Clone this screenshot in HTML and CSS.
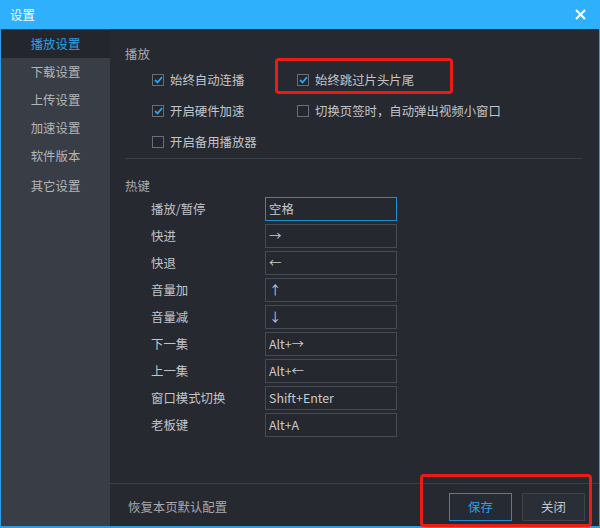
FILE: index.html
```html
<!DOCTYPE html>
<html lang="zh-CN">
<head>
    <meta charset="UTF-8">
    <meta name="viewport" content="width=device-width, initial-scale=1.0">
    <title>设置</title>
    <link rel="stylesheet" href="styles.css">
</head>
<body>
<div class="window">
    <div class="title-bar">
        <span class="title">设置</span>
        <svg class="close" width="11" height="11" viewBox="0 0 11 11">
            <path d="M1 1 L10 10 M10 1 L1 10" stroke="#fff" stroke-width="2.2" fill="none"/>
        </svg>
    </div>

    <div class="frame">
        <ul class="side-nav">
            <li class="active">播放设置</li>
            <li>下载设置</li>
            <li>上传设置</li>
            <li>加速设置</li>
            <li>软件版本</li>
            <li class="gap">其它设置</li>
        </ul>

        <div class="main">
            <div class="content">
                <div class="section-title">播放</div>
                <div class="check-grid">
                    <label class="check"><span class="box on"><svg width="9" height="8" viewBox="0 0 9 8"><path d="M1 4 L3.5 6.5 L8 1.2" stroke="#2ba3f2" stroke-width="1.8" fill="none"/></svg></span>始终自动连播</label>
                    <label class="check"><span class="box on"><svg width="9" height="8" viewBox="0 0 9 8"><path d="M1 4 L3.5 6.5 L8 1.2" stroke="#2ba3f2" stroke-width="1.8" fill="none"/></svg></span>始终跳过片头片尾</label>
                    <label class="check"><span class="box on"><svg width="9" height="8" viewBox="0 0 9 8"><path d="M1 4 L3.5 6.5 L8 1.2" stroke="#2ba3f2" stroke-width="1.8" fill="none"/></svg></span>开启硬件加速</label>
                    <label class="check"><span class="box"></span>切换页签时，自动弹出视频小窗口</label>
                    <label class="check"><span class="box"></span>开启备用播放器</label>
                </div>

                <div class="divider"></div>

                <div class="section-title hotkey-title">热键</div>
                <div class="hotkeys">
                    <span class="key-label">播放/暂停</span><span class="key-input focus">空格</span>
                    <span class="key-label">快进</span><span class="key-input">→</span>
                    <span class="key-label">快退</span><span class="key-input">←</span>
                    <span class="key-label">音量加</span><span class="key-input">↑</span>
                    <span class="key-label">音量减</span><span class="key-input">↓</span>
                    <span class="key-label">下一集</span><span class="key-input">Alt+→</span>
                    <span class="key-label">上一集</span><span class="key-input">Alt+←</span>
                    <span class="key-label">窗口模式切换</span><span class="key-input">Shift+Enter</span>
                    <span class="key-label">老板键</span><span class="key-input">Alt+A</span>
                </div>
            </div>

            <div class="footer">
                <span class="reset">恢复本页默认配置</span>
                <div class="buttons">
                    <button class="btn primary">保存</button>
                    <button class="btn">关闭</button>
                </div>
            </div>
        </div>
    </div>

    <!-- annotation boxes -->
    <div class="mark mark-skip"></div>
    <div class="mark mark-buttons"></div>
</div>
</body>
</html>
```

FILE: styles.css
```css
* {
	box-sizing: border-box;
}

body {
	margin: 0;
	background: #262930;
	font-family: "Noto Sans CJK SC", "Microsoft YaHei", sans-serif;
	font-size: 12.4px;
}

.window {
	position: relative;
	width: 600px;
	height: 528px;
	display: flex;
	flex-direction: column;
	background: #262930;
}

/* title */
.title-bar {
	height: 29px;
	flex: 0 0 29px;
	background: #2eb0fc;
	display: flex;
	align-items: center;
	justify-content: space-between;
	padding: 0 14px 0 10px;
}

.title {
	color: #fff;
	font-size: 12.4px;
}

.close {
	display: block;
}

/* frame */
.frame {
	flex: 1;
	display: flex;
	border-left: 1px solid #2a9fe6;
	border-right: 1px solid #2a9fe6;
	border-bottom: 2px solid #2a9fe6;
	min-height: 0;
}

.side-nav {
	list-style: none;
	margin: 0;
	padding: 1px 0 0;
	width: 109px;
	flex: 0 0 109px;
	background: #393d46;
}

.side-nav li {
	height: 28px;
	line-height: 28px;
	text-align: center;
	color: #b3b5b9;
}

.side-nav li.active {
	background: #23262d;
	color: #2ba3e8;
}

.side-nav li.gap {
	margin-top: 2px;
}

.main {
	flex: 1;
	display: flex;
	flex-direction: column;
}

.content {
	flex: 1;
	padding: 15px 17px 0 15px;
}

.section-title {
	height: 20px;
	line-height: 20px;
	color: #a9abb0;
}

.check-grid {
	display: grid;
	grid-template-columns: 145px auto;
	grid-auto-rows: 31px;
	padding-left: 27px;
}

.check {
	display: flex;
	align-items: center;
	color: #c2c4c8;
}

.box {
	width: 12px;
	height: 12px;
	border: 1px solid #6a6e76;
	margin-right: 6px;
	display: flex;
	align-items: center;
	justify-content: center;
	background: #23262d;
}

.box svg {
	display: block;
}

.divider {
	height: 1px;
	background: #3a3e47;
	margin-top: 1px;
}

.hotkey-title {
	margin-top: 17px;
	margin-bottom: 1px;
}

.hotkeys {
	display: grid;
	grid-template-columns: 114px 132px;
	grid-auto-rows: 24px;
	row-gap: 3px;
	padding-left: 26px;
}

.key-label {
	line-height: 24px;
	color: #c2c4c8;
}

.key-input {
	border: 1px solid #464a53;
	background: #25282f;
	color: #c8cacd;
	line-height: 22px;
	padding-left: 3px;
}

.key-input.focus {
	border-color: #1c8fd4;
}

/* footer */
.footer {
	flex: 0 0 43px;
	border-top: 1px solid #3b3f48;
	display: flex;
	justify-content: space-between;
	align-items: flex-start;
	padding: 9px 14px 0 18px;
}

.reset {
	line-height: 28px;
	color: #a6a8ac;
}

.buttons {
	display: flex;
	gap: 10px;
}

.btn {
	width: 63px;
	height: 28px;
	font-family: inherit;
	font-size: 12.4px;
	background: #2a2e36;
	border: 1px solid #3e424b;
	color: #c2c4c8;
	padding: 0;
}

.btn.primary {
	background: #262a32;
	border-color: #1f8ed0;
	color: #2ba3e8;
}

/* red annotation boxes */
.mark {
	position: absolute;
	border: 3px solid #ec1c14;
	border-radius: 4px;
}

.mark-skip {
	left: 275px;
	top: 58px;
	width: 178px;
	height: 36px;
}

.mark-buttons {
	left: 420px;
	top: 474px;
	width: 172px;
	height: 53px;
}
```
